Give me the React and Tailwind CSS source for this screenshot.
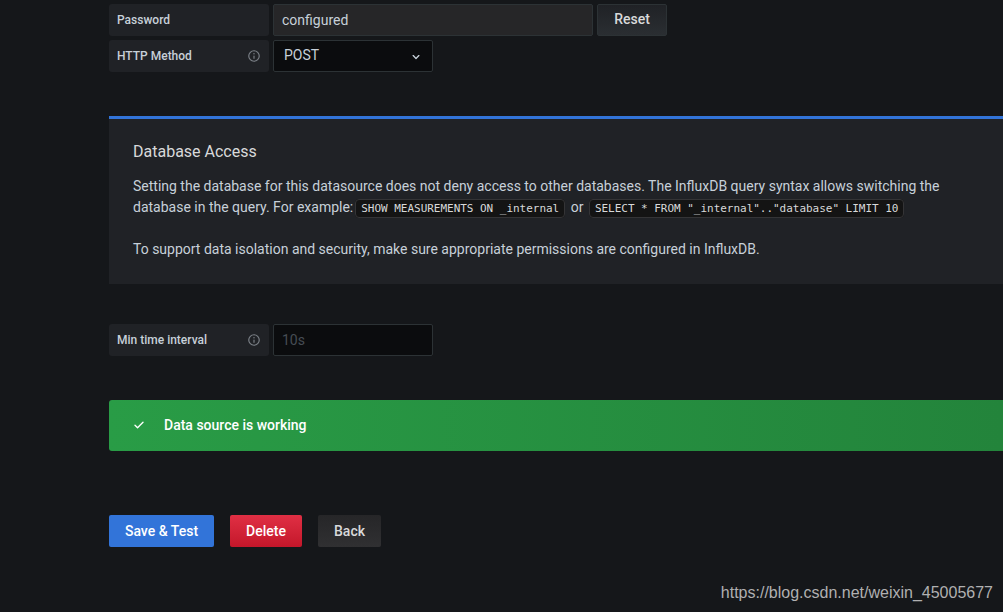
import React from 'react';

const InfoIcon = () => (
  <svg viewBox="0 0 24 24" className="w-[14px] h-[14px] fill-[#7b8087]">
    <path d="M12,2A10,10,0,1,0,22,12,10,10,0,0,0,12,2Zm0,18a8,8,0,1,1,8-8A8,8,0,0,1,12,20Zm0-9a1,1,0,0,0-1,1v4a1,1,0,0,0,2,0V12A1,1,0,0,0,12,11Zm0-4a1.25,1.25,0,1,0,1.25,1.25A1.25,1.25,0,0,0,12,7Z" />
  </svg>
);

const AngleDownIcon = () => (
  <svg viewBox="0 0 24 24" className="w-4 h-4 mt-px fill-[#c7d0d9]">
    <path d="M17,9.17a1,1,0,0,0-1.41,0L12,12.71,8.46,9.17a1,1,0,0,0-1.41,0,1,1,0,0,0,0,1.42l4.24,4.24a1,1,0,0,0,1.42,0L17,10.59A1,1,0,0,0,17,9.17Z" />
  </svg>
);

const CheckIcon = () => (
  <svg viewBox="0 0 24 24" className="w-4 h-4 mb-px fill-white">
    <path d="M18.71,7.21a1,1,0,0,0-1.42,0L9.84,14.67,6.71,11.53A1,1,0,1,0,5.29,13l3.84,3.84a1,1,0,0,0,1.42,0l8.16-8.16A1,1,0,0,0,18.71,7.21Z" />
  </svg>
);

const Label = ({ children, info }) => (
  <div className="flex items-center justify-between w-40 h-8 pl-2 pr-2 mr-1 shrink-0 rounded-[3px] bg-[#202226] text-[12px] font-medium text-[#c7d0d9]">
    <span>{children}</span>
    {info && <InfoIcon />}
  </div>
);

const Code = ({ children }) => (
  <code className="font-['DejaVu_Sans_Mono',monospace] text-[11px] leading-[15px] tracking-[-0.025px] whitespace-nowrap text-[#d8d9da] bg-[#141414] border border-[#343436] rounded-[4px] px-[5px] py-[2px] mx-[2px]">
    {children}
  </code>
);

const App = () => {
  return (
    <div className="w-full h-[612px] overflow-hidden bg-[#15171a] pt-1 pl-[109px] font-['Roboto',sans-serif] text-[14px] text-[#c7d0d9]">
      {/* Connection settings */}
      <div className="flex">
        <Label>Password</Label>
        <div className="flex items-center w-80 h-8 px-2 mr-1 border border-[#2c3235] rounded-xs bg-[#262628]">configured</div>
        <button className="w-[70px] h-8 pb-[2px] border border-[#2c3235] rounded-xs bg-gradient-to-b from-[#202226] to-[#2a2e32] font-medium text-[#d8d9da]">
          Reset
        </button>
      </div>
      <div className="flex mt-1">
        <Label info>HTTP Method</Label>
        <div className="flex items-center justify-between w-40 h-8 pl-[10px] pr-2 border border-[#2c3235] rounded-xs bg-[#0b0c0e]">
          <span className="pb-px">POST</span>
          <AngleDownIcon />
        </div>
      </div>

      {/* Database access notice */}
      <div className="mt-11 h-[168px] border-t-[3px] border-[#3274d9] bg-[#202226] pl-6 pt-[22px]">
        <h5 className="text-[16px] leading-[21px] text-[#d8d9da]">Database Access</h5>
        <p className="mt-[14px] w-[830px] leading-[21px]">
          Setting the database for this datasource does not deny access to other databases. The InfluxDB query syntax allows switching the
          <br />
          database in the query. For example:
          <Code>SHOW MEASUREMENTS ON _internal</Code> or <Code>SELECT * FROM "_internal".."database" LIMIT 10</Code>
          <br />
          <br />
          To support data isolation and security, make sure appropriate permissions are configured in InfluxDB.
        </p>
      </div>

      <div className="flex mt-10">
        <Label info>Min time interval</Label>
        <input
          placeholder="10s"
          className="w-40 h-8 px-2 border border-[#2c3235] rounded-xs bg-[#0b0c0e] placeholder:text-[#464c54] outline-none"
        />
      </div>

      {/* Test result */}
      <div className="flex items-center mt-11 h-[51px] pl-[22px] rounded-l-[3px] bg-gradient-to-r from-[#299c46] to-[#23843b] text-white font-medium">
        <CheckIcon />
        <span className="ml-[17px]">Data source is working</span>
      </div>

      <div className="flex gap-4 mt-16 font-medium">
        <button className="w-[105px] h-8 rounded-xs bg-[#3274d9] text-white">Save & Test</button>
        <button className="w-[72px] h-8 rounded-xs bg-gradient-to-b from-[#e02f44] to-[#c4162a] text-white">Delete</button>
        <button className="w-[63px] h-8 rounded-xs bg-gradient-to-b from-[#262628] to-[#303032] text-[#d8d9da]">Back</button>
      </div>

      <div className="mt-[35px] pr-[10px] text-right font-['Liberation_Sans',sans-serif] text-[16px] leading-[22px] text-[#b0b0b1]">
        https://blog.csdn.net/weixin_45005677
      </div>
    </div>
  );
};

export default App;
